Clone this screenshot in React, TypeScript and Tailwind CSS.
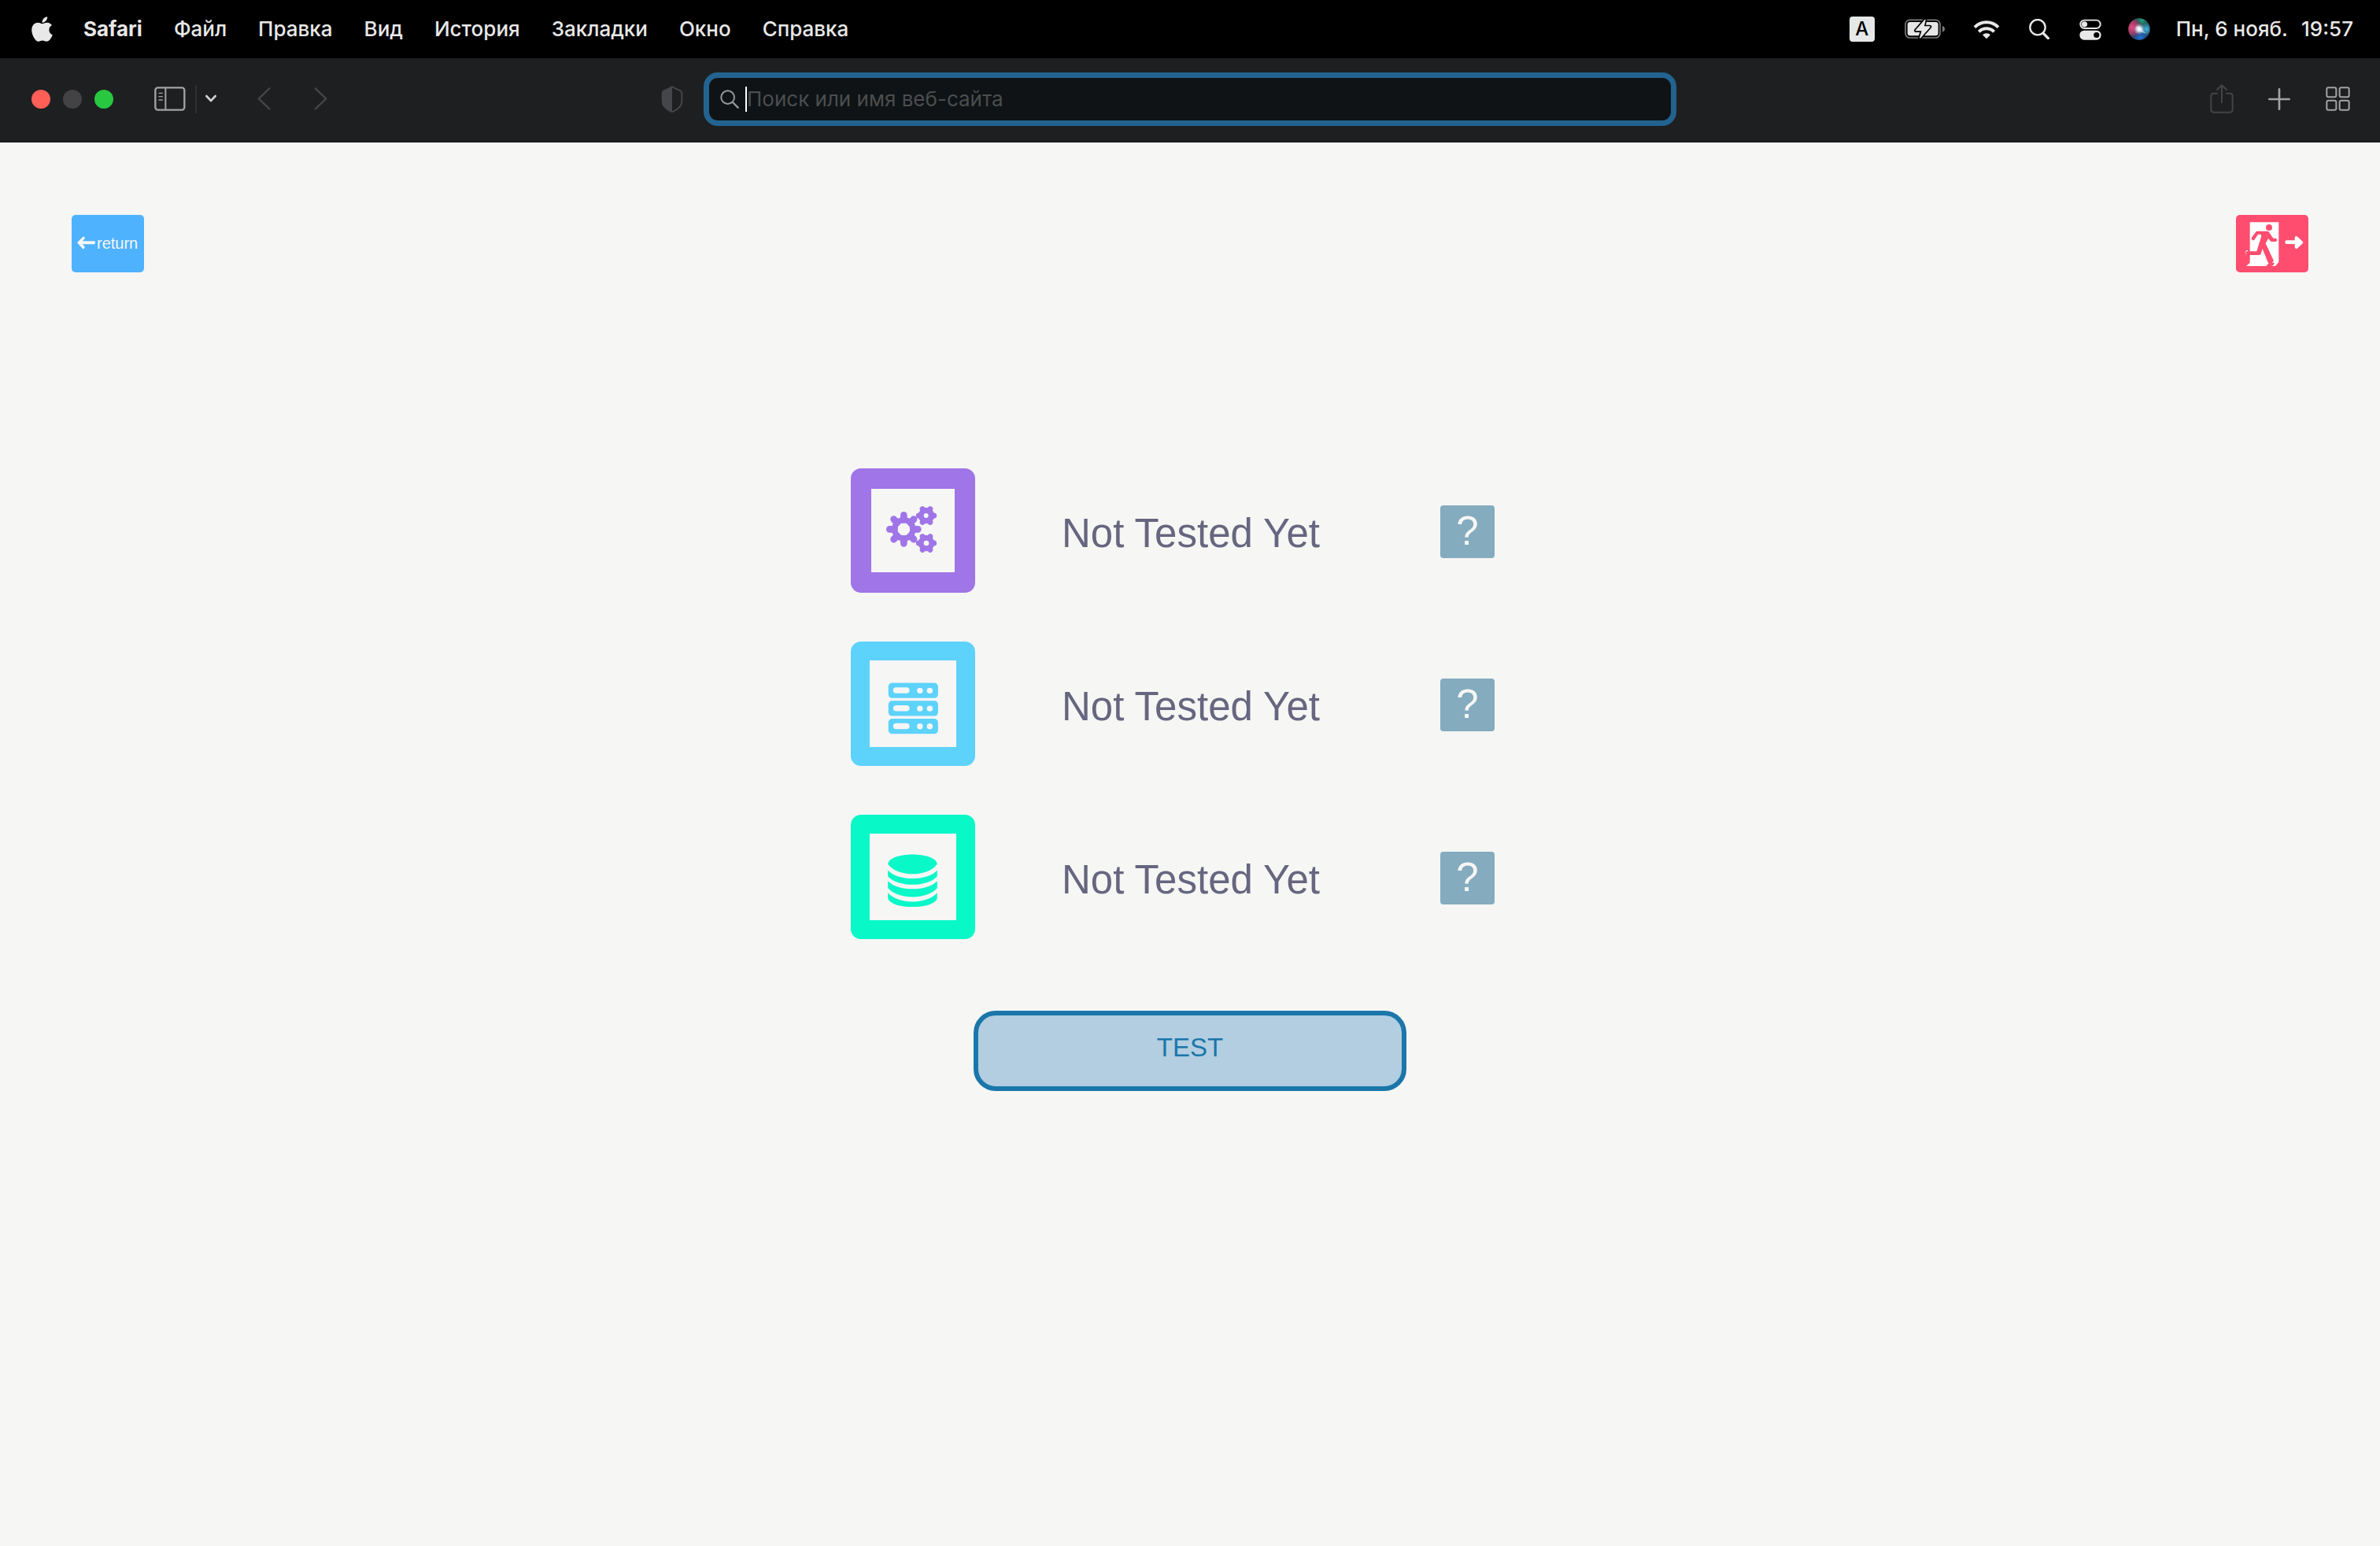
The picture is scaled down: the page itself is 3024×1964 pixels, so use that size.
import React from "react";
import { FaApple } from "react-icons/fa";

const menus = ["Файл", "Правка", "Вид", "История", "Закладки", "Окно", "Справка"];

function MenuBar() {
  return (
    <header className="flex h-[74px] items-center justify-between bg-black pr-[34px] pl-10 text-[26px] leading-8 text-[#e8e8e8]">
      <nav aria-label="Меню" className="flex items-center gap-10">
        <button aria-label="Apple" className="h-9 w-[26px]">
          <FaApple className="h-9 w-[27px]" />
        </button>
        <button className="font-bold">Safari</button>
        {menus.map((m) => (
          <button key={m} className="font-medium">
            {m}
          </button>
        ))}
      </nav>
      <div className="flex items-center">
        <span className="mr-[38px] flex size-8 items-center justify-center rounded bg-[#e6e8e7] text-2xl font-medium text-black">
          A
        </span>
        <BatteryIcon />
        <WifiIcon />
        <MenuSearchIcon />
        <ControlCenterIcon />
        <SiriIcon />
        <time className="flex gap-[17px] font-medium">
          <span>Пн, 6 нояб.</span>
          <span>19:57</span>
        </time>
      </div>
    </header>
  );
}

function BatteryIcon() {
  return (
    <svg viewBox="240 42 153 78" className="mr-9 h-[26px] w-[51px]" aria-hidden="true">
      <rect x="243" y="46" width="132" height="68" rx="17" fill="none" stroke="#7b7b7b" strokeWidth="5" />
      <path d="M384 68c12 4 12 20 0 24z" fill="#7b7b7b" />
      <rect x="251" y="54" width="117" height="52" rx="10" fill="#e6e6e6" />
      <path
        d="M318 46 283 86h24l-8 28 37-42h-24z"
        fill="#e6e6e6"
        stroke="#000"
        strokeWidth="14"
        strokeLinejoin="round"
      />
      <path d="M318 46 283 86h24l-8 28 37-42h-24z" fill="#e6e6e6" stroke="#e6e6e6" strokeWidth="4" strokeLinejoin="round" />
    </svg>
  );
}

function WifiIcon() {
  return (
    <svg viewBox="501 39 102 78" className="mr-[37px] h-[26px] w-[34px]" aria-hidden="true">
      <g fill="none" stroke="#e8e8e8" strokeWidth="12">
        <path d="M507 71a63 63 0 0 1 90 0" />
        <path d="M523 88a41 41 0 0 1 58 0" />
      </g>
      <path d="M537 100a21 21 0 0 1 30 0l-15 15z" fill="#e8e8e8" />
    </svg>
  );
}

function MenuSearchIcon() {
  return (
    <svg viewBox="715 42 78 78" className="mr-[38px] size-[26px]" aria-hidden="true">
      <g fill="none" stroke="#e8e8e8">
        <circle cx="748" cy="74" r="29" strokeWidth="7" />
        <path d="m770 97 18 19" strokeWidth="10" strokeLinecap="round" />
      </g>
    </svg>
  );
}

function ControlCenterIcon() {
  return (
    <svg viewBox="905 43 86 81" className="mr-[34px] h-[27px] w-7" aria-hidden="true">
      <rect x="909" y="47" width="78" height="32" rx="16" fill="none" stroke="#e8e8e8" strokeWidth="6" />
      <circle cx="925" cy="63" r="11" fill="#e8e8e8" />
      <rect x="906" y="87" width="84" height="37" rx="18" fill="#e8e8e8" />
      <circle cx="972" cy="105" r="11" fill="#000" />
    </svg>
  );
}

function SiriIcon() {
  return (
    <svg viewBox="0 0 84 84" className="mr-[33px] size-7" aria-hidden="true">
      <defs>
        <radialGradient id="siri-pink" cx="0.16" cy="0.42" r="0.5">
          <stop offset="0" stopColor="#e84a7d" />
          <stop offset="0.6" stopColor="#b03a68" stopOpacity="0.8" />
          <stop offset="1" stopColor="#5a3a5c" stopOpacity="0" />
        </radialGradient>
        <radialGradient id="siri-green" cx="0.62" cy="0.1" r="0.45">
          <stop offset="0" stopColor="#1fa678" />
          <stop offset="1" stopColor="#1c5b55" stopOpacity="0" />
        </radialGradient>
        <radialGradient id="siri-blue" cx="0.55" cy="0.88" r="0.5">
          <stop offset="0" stopColor="#1c74d8" />
          <stop offset="1" stopColor="#1d4f9c" stopOpacity="0" />
        </radialGradient>
        <radialGradient id="siri-cyan" cx="0.84" cy="0.5" r="0.3">
          <stop offset="0" stopColor="#3fb9e0" />
          <stop offset="1" stopColor="#3fb9e0" stopOpacity="0" />
        </radialGradient>
        <radialGradient id="siri-core" cx="0.5" cy="0.5" r="0.26">
          <stop offset="0" stopColor="#fff" />
          <stop offset="0.4" stopColor="#e6f4ff" stopOpacity="0.85" />
          <stop offset="1" stopColor="#a8c8f0" stopOpacity="0" />
        </radialGradient>
      </defs>
      <circle cx="42" cy="42" r="41" fill="#2b4358" />
      <circle cx="42" cy="42" r="41" fill="url(#siri-green)" />
      <circle cx="42" cy="42" r="41" fill="url(#siri-blue)" />
      <circle cx="42" cy="42" r="41" fill="url(#siri-pink)" />
      <circle cx="42" cy="42" r="41" fill="url(#siri-cyan)" />
      <circle cx="42" cy="42" r="41" fill="url(#siri-core)" />
      <path d="M30 34c10-6 18 2 24 10s10 10 16 10c-10 6-20 0-26-5s-8-8-14-15z" fill="#fff" opacity="0.5" />
    </svg>
  );
}

function Toolbar() {
  return (
    <div className="grid h-[107px] grid-cols-[447fr_618fr_447fr] items-center border-b-2 border-[#1a1a1d] bg-[#1e1f21] pb-0.5">
      <div className="flex items-center justify-between pr-[26px] pl-10">
        <div className="flex items-center">
          <div className="mr-[52px] flex gap-4">
            <button aria-label="Закрыть" className="size-6 rounded-full bg-[#ff5f57]" />
            <button aria-label="Свернуть" className="size-6 rounded-full bg-[#434345]" />
            <button aria-label="Развернуть" className="size-6 rounded-full bg-[#28c840]" />
          </div>
          <button aria-label="Боковая панель" className="mr-3">
            <svg viewBox="527 298 120 93" className="h-[31px] w-10" fill="none" stroke="#a3a3a5">
              <rect x="531" y="302" width="111" height="85" rx="10" strokeWidth="7" />
              <path d="M570 302v85" strokeWidth="6" />
              <path d="M545 323h13M545 336h13M545 349h13" strokeWidth="4" strokeLinecap="round" />
            </svg>
          </button>
          <span className="h-9 w-0.5 bg-[#2f3032]" />
          <button aria-label="Группы вкладок" className="ml-[10px]">
            <svg viewBox="0 0 48 36" className="h-3 w-4" fill="none" stroke="#d0d0d2" strokeWidth="8" strokeLinecap="round" strokeLinejoin="round">
              <path d="m7 6 17 18L41 6" />
            </svg>
          </button>
          <button aria-label="Назад" className="ml-[51px]">
            <svg viewBox="0 0 51 87" className="h-[29px] w-[17px]" fill="none" stroke="#454547" strokeWidth="7" strokeLinecap="round" strokeLinejoin="round">
              <path d="M46 4 5 43l41 39" />
            </svg>
          </button>
          <button aria-label="Вперёд" className="ml-[55px]">
            <svg viewBox="0 0 51 87" className="h-[29px] w-[17px]" fill="none" stroke="#454547" strokeWidth="7" strokeLinecap="round" strokeLinejoin="round">
              <path d="m5 4 41 39L5 82" />
            </svg>
          </button>
        </div>
        <button aria-label="Отчёт о конфиденциальности">
          <svg viewBox="0 0 84 102" className="h-[34px] w-7">
            <path
              d="M42 4c3 0 6 3 12 6 8 4 14 6 20 9 4 2 5 4 5 9v31c0 20-16 31-33 39-3 1-5 1-8 0C21 90 5 79 5 59V28c0-5 1-7 5-9 6-3 12-5 20-9 6-3 9-6 12-6z"
              fill="none"
              stroke="#454649"
              strokeWidth="6"
            />
            <path d="M42 4v95C25 92 5 80 5 59V28c0-5 1-7 5-9 12-5 20-9 32-15z" fill="#454649" />
          </svg>
        </button>
      </div>

      <label className="flex h-[68px] items-center rounded-[18px] border-[7px] border-[#22638f] bg-[#0f1315] pl-[14px]">
        <svg viewBox="0 0 72 72" className="mr-[8px] size-6 shrink-0" fill="none" stroke="#98989a" aria-hidden="true">
          <circle cx="29" cy="29" r="25" strokeWidth="6" />
          <path d="m48 48 20 20" strokeWidth="7" strokeLinecap="round" />
        </svg>
        <span className="h-8 w-0.5 bg-white" />
        <input
          type="text"
          aria-label="Адрес"
          placeholder="Поиск или имя веб-сайта"
          className="min-w-0 flex-1 bg-transparent text-[26px] leading-8 text-white outline-none placeholder:text-[#4b4d4f] placeholder:opacity-100"
        />
      </label>

      <div className="flex items-center justify-end pr-[38px]">
        <button aria-label="Поделиться" className="mr-11">
          <svg viewBox="0 0 90 114" className="h-[38px] w-[30px]" fill="none" stroke="#434446" strokeWidth="6" strokeLinecap="round" strokeLinejoin="round">
            <path d="M27 35H14q-10 0-10 10v52q0 10 10 10h62q10 0 10-10V45q0-10-10-10H63" />
            <path d="M45 70V4M27 21 45 4l18 17" />
          </svg>
        </button>
        <button aria-label="Новая вкладка" className="mr-[45px]">
          <svg viewBox="0 0 84 84" className="size-7" fill="none" stroke="#a3a3a5" strokeWidth="8" strokeLinecap="round">
            <path d="M42 4v76M4 42h76" />
          </svg>
        </button>
        <button aria-label="Обзор вкладок">
          <svg viewBox="0 0 93 93" className="size-[31px]" fill="none" stroke="#a3a3a5" strokeWidth="6">
            <rect x="4" y="4" width="36" height="36" rx="6" />
            <rect x="53" y="4" width="36" height="36" rx="6" />
            <rect x="4" y="53" width="36" height="36" rx="6" />
            <rect x="53" y="53" width="36" height="36" rx="6" />
          </svg>
        </button>
      </div>
    </div>
  );
}

function ReturnButton() {
  return (
    <button className="flex h-[73px] w-[92px] items-center rounded-[5px] bg-[#4eb2ff] pb-0.5 pl-[7px] text-[20px] leading-6 text-[#f6f6f4]">
      <svg viewBox="84 150 69 51" className="mr-[2px] h-[17px] w-[23px] shrink-0" aria-hidden="true">
        <path
          d="M84 175 106 152q3-2 6 2 3 4 0 7l-8 8h46q3 0 3 6t-3 6h-46l8 8q3 3 0 6-3 5-7 3z"
          fill="#f6f6f4"
        />
      </svg>
      return
    </button>
  );
}

function ExitButton() {
  return (
    <button aria-label="Exit" className="h-[73px] w-[92px] overflow-hidden rounded-[5px] bg-[#ff4d6f]">
      <svg viewBox="63 69 276 219" className="h-full w-full">
        <path d="M116 97h110v152l-13 15H102l14-13z" fill="#fdfdfd" />
        <path d="M108 205q-9 2-7 11 1 4 6 4" fill="none" stroke="#fdfdfd" strokeWidth="4" />
        <g fill="#ff4d6f">
          <circle cx="189" cy="117" r="12" />
          <path d="M141 131h41q5 0 7 4l16 23h9q5 1 5 7t-5 6h-14q-5 0-7-4l-7-8-10 19 31 66-9 10-12-1-22-55-6 19q-2 5-7 5h-46q-5 0-5-7t5-7h37l18-58-3-7h-10l-13 20q-3 5-9 1-5-3-2-9z" />
          <path d="M178 264q8-11 14-13h16q4 6-9 13z" />
        </g>
        <path d="M250 173q0-7 6-7h31v-9q0-7 6-7 3 0 5 2l19 18q4 4 0 8l-19 18q-3 3-7 1-4-2-4-7v-10h-31q-6 0-6-7z" fill="#fdfdfd" />
      </svg>
    </button>
  );
}

function Teeth({ cx, cy, angles, inner, outer, width }: { cx: number; cy: number; angles: number[]; inner: number; outer: number; width: number }) {
  return (
    <g stroke="#9f75e8" strokeWidth={width} strokeLinecap="round">
      {angles.map((a) => {
        const r = (a * Math.PI) / 180;
        return (
          <line
            key={a}
            x1={cx + inner * Math.cos(r)}
            y1={cy + inner * Math.sin(r)}
            x2={cx + outer * Math.cos(r)}
            y2={cy + outer * Math.sin(r)}
          />
        );
      })}
    </g>
  );
}

function GearsIcon() {
  const six = [0, 60, 120, 180, 240, 300];
  const eight = [0, 45, 90, 135, 180, 225, 270, 315];
  return (
    <svg viewBox="141 153 318 318" className="size-full" aria-hidden="true">
      <Teeth cx={265} cy={307} angles={eight} inner={36} outer={54} width={26} />
      <circle cx="265" cy="307" r="35" fill="none" stroke="#9f75e8" strokeWidth="22" />
      <Teeth cx={351} cy={255} angles={six} inner={14} outer={29} width={21} />
      <Teeth cx={351} cy={360} angles={six} inner={14} outer={29} width={21} />
      <circle cx="351" cy="255" r="31" fill="#9f75e8" />
      <circle cx="351" cy="360" r="31" fill="#9f75e8" />
      <circle cx="350" cy="255" r="9" fill="#f6f6f4" />
      <circle cx="351" cy="360" r="10" fill="#f6f6f4" />
    </svg>
  );
}

function ServersIcon() {
  return (
    <svg viewBox="137 151 324 324" className="size-full" aria-hidden="true">
      {[235, 302, 369].map((y) => (
        <g key={y}>
          <rect x="207" y={y} width="186" height="57" rx="14" fill="#5dd2fb" />
          <rect x="225" y={y + 17} width="61" height="22" rx="11" fill="#f6f6f4" />
          <circle cx="325" cy={y + 29} r="11" fill="#f6f6f4" />
          <circle cx="362" cy={y + 29} r="11" fill="#f6f6f4" />
        </g>
      ))}
    </svg>
  );
}

function DatabaseIcon() {
  return (
    <svg viewBox="138 149 327 327" className="size-full" fill="#08f8c8" aria-hidden="true">
      <path d="M207 264c6-48 180-48 186 0-36 50-150 50-186 0z" />
      <path d="M207 287c36 42 150 42 186 0v23c-36 42-150 42-186 0z" />
      <path d="M207 328c36 40 150 40 186 0v27c-36 44-150 44-186 0z" />
      <path d="M207 373c36 44 150 44 186 0v18c-6 46-180 46-186 0z" />
    </svg>
  );
}

const checks = [
  { name: "Service", tile: "bg-[#9f75e8] p-[26px]", icon: <GearsIcon /> },
  { name: "Server", tile: "bg-[#5dd2fb] p-6", icon: <ServersIcon /> },
  { name: "Database", tile: "bg-[#08f8c8] p-6", icon: <DatabaseIcon /> },
];

export default function App() {
  return (
    <div className="min-h-screen bg-[#f6f6f4] font-['Inter',sans-serif]">
      <MenuBar />
      <Toolbar />
      <main className="font-['Liberation_Sans',Arial,sans-serif]">
        <div className="flex justify-between px-[91px] pt-[92px]">
          <ReturnButton />
          <ExitButton />
        </div>
        <div className="flex flex-col items-center pt-[249px]">
          <ul className="flex flex-col gap-[62px] pr-11">
            {checks.map((c) => (
              <li key={c.name} className="flex items-center">
                <div className={"size-[158px] rounded-[13px] " + c.tile}>
                  <div className="size-full bg-[#f6f6f4]">{c.icon}</div>
                </div>
                <p className="w-[591px] pt-2 pl-[110px] text-[51px] leading-[56px] text-[#666680]">Not Tested Yet</p>
                <button
                  aria-label={c.name + " help"}
                  className="mt-0.5 flex h-[67px] w-[69px] items-center justify-center rounded bg-[#84abbe] text-[51px] leading-[56px] text-[#f6f6f4]"
                >
                  ?
                </button>
              </li>
            ))}
          </ul>
          <button className="mt-[91px] h-[102px] w-[550px] rounded-[28px] border-[6px] border-[#1b76aa] bg-[#b2cee0] pb-2 text-[33px] leading-10 text-[#1b76aa]">
            TEST
          </button>
        </div>
      </main>
    </div>
  );
}
